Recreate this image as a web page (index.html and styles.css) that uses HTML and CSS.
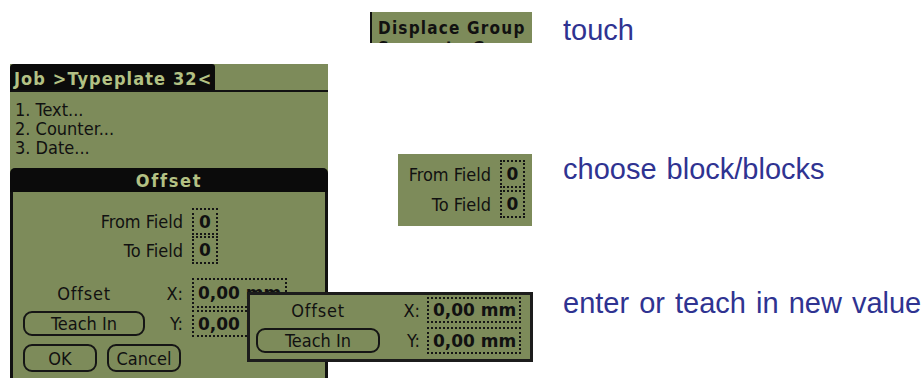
FILE: index.html
```html
<!DOCTYPE html>
<html lang="en">
<head>
    <meta charset="UTF-8">
    <meta name="viewport" content="width=device-width, initial-scale=1.0">
    <title>Displace Group - Offset</title>
    <link rel="stylesheet" href="styles.css">
</head>
<body>
    <div class="page">
        <!-- main handheld screen -->
        <div class="palm">
            <div class="titlebar"><span class="tab">Job &gt;Typeplate 32&lt;</span></div>
            <ul class="menu-list">
                <li>1. Text...</li>
                <li>2. Counter...</li>
                <li>3. Date...</li>
            </ul>
            <div class="dialog">
                <div class="dialog-title">Offset</div>
                <div class="dialog-body">
                    <div class="row row-from">
                        <span class="label label-wide">From Field</span>
                        <span class="field field-small">0</span>
                    </div>
                    <div class="row row-to">
                        <span class="label label-wide">To Field</span>
                        <span class="field field-small">0</span>
                    </div>
                    <div class="row row-x">
                        <span class="label label-cell">Offset</span>
                        <span class="label label-axis">X:</span>
                        <span class="field field-value">0,00 mm</span>
                    </div>
                    <div class="row row-y">
                        <span class="btn btn-teach">Teach In</span>
                        <span class="label label-axis">Y:</span>
                        <span class="field field-value">0,00 mm</span>
                    </div>
                    <div class="row row-buttons">
                        <span class="btn btn-ok">OK</span>
                        <span class="btn btn-cancel">Cancel</span>
                    </div>
                </div>
            </div>
        </div>

        <!-- step 1 -->
        <div class="callout callout-menu">
            <div class="menu-item">Displace Group</div>
            <div class="menu-item">Separate Group</div>
        </div>
        <p class="note note-touch">touch</p>

        <!-- step 2 -->
        <div class="callout callout-fields">
            <div class="row">
                <span class="label label-from">From Field</span>
                <span class="field field-small">0</span>
            </div>
            <div class="row row-gap">
                <span class="label label-from">To Field</span>
                <span class="field field-small">0</span>
            </div>
        </div>
        <p class="note note-choose">choose block/blocks</p>

        <!-- step 3 -->
        <div class="callout callout-offset">
            <div class="row">
                <span class="label label-cell2">Offset</span>
                <span class="label label-axis2">X:</span>
                <span class="field field-value2">0,00 mm</span>
            </div>
            <div class="row row-gap2">
                <span class="btn btn-teach2">Teach In</span>
                <span class="label label-axis2">Y:</span>
                <span class="field field-value2">0,00 mm</span>
            </div>
        </div>
        <p class="note note-enter">enter or teach in new value</p>
    </div>
</body>
</html>
```

FILE: styles.css
```css
body {
    margin: 0;
    background-color: #fff;
    font-family: "DejaVu Sans Condensed", "DejaVu Sans", sans-serif;
    font-stretch: condensed;
    color: #111;
}
.page {
    display: grid;
    grid-template-columns: 532px 1fr;
    grid-template-rows: 64px 176px 138px;
    column-gap: 31px;
    height: 378px;
    overflow: hidden;
}

/* handheld screen */
.palm {
    grid-column: 1;
    grid-row: 2 / 4;
    justify-self: start;
    margin-left: 10px;
    width: 318px;
    height: 330px;
    background-color: #7d8b5a;
    font-size: 18px;
}
.titlebar {
    display: flex;
    height: 26px;
    border-bottom: 2px solid #111;
}
.tab {
    width: 205px;
    padding-left: 4px;
    box-sizing: border-box;
    background-color: #0b0b0b;
    color: #b3c184;
    font-weight: bold;
    letter-spacing: 1.1px;
    line-height: 30px;
    border-radius: 4px 3px 0 0;
    white-space: nowrap;
}
.menu-list {
    list-style: none;
    margin: 0;
    padding: 8px 0 0 5px;
    line-height: 19px;
}
.dialog {
    margin-top: 11px;
}
.dialog-title {
    height: 24px;
    background-color: #0b0b0b;
    color: #b3c184;
    font-weight: bold;
    letter-spacing: 1.7px;
    text-align: center;
    line-height: 26px;
    border-radius: 5px 5px 0 0;
}
.dialog-body {
    border-left: 3px solid #111;
    border-right: 3px solid #111;
    height: 200px;
    padding-top: 16px;
}

/* rows, labels, fields */
.row {
    display: flex;
    align-items: center;
}
.label {
    white-space: nowrap;
}
.label-wide {
    width: 170px;
    margin-right: 9px;
    text-align: right;
}
.label-cell {
    margin-left: 10px;
    width: 122px;
    text-align: center;
    letter-spacing: 0.8px;
}
.label-axis {
    width: 38px;
    margin-right: 9px;
    text-align: right;
}
.field {
    box-sizing: border-box;
    border: 2px dotted #151515;
    font-family: "DejaVu Sans", sans-serif;
    font-stretch: normal;
    font-weight: bold;
    display: flex;
    align-items: center;
    white-space: nowrap;
    overflow: hidden;
}
.field-small {
    width: 26px;
    height: 28px;
    justify-content: center;
    font-size: 17px;
}
.row-from .field-small {
    height: 27px;
}
.row-to {
    margin-top: 1px;
}
.row-x {
    margin-top: 14px;
}
.row-x .field {
    height: 30px;
}
.row-y {
    margin-top: 2px;
}
.field-value {
    width: 95px;
    height: 27px;
    padding-left: 4px;
    font-size: 17px;
}
.btn {
    box-sizing: border-box;
    border: 2px solid #151515;
    border-radius: 9px;
    display: flex;
    align-items: center;
    justify-content: center;
    height: 25px;
}
.btn-teach {
    margin-left: 10px;
    width: 122px;
}
.row-buttons {
    margin-top: 7px;
}
.btn-ok, .btn-cancel {
    width: 74px;
    height: 28px;
}
.btn-ok {
    margin-left: 10px;
}
.btn-cancel {
    margin-left: 10px;
}

/* callouts */
.callout {
    grid-column: 1;
    justify-self: end;
    align-self: start;
    background-color: #7d8b5a;
    font-size: 18px;
    z-index: 2;
    box-sizing: border-box;
}
.callout-menu {
    grid-row: 1;
    margin-top: 12px;
    width: 162px;
    height: 31px;
    border-left: 2px solid #111;
    padding: 6px 0 0 6px;
    overflow: hidden;
}
.menu-item {
    font-weight: bold;
    font-size: 17px;
    letter-spacing: 1.2px;
    line-height: 20px;
    white-space: nowrap;
}
.callout-fields {
    grid-row: 2;
    margin-top: 90px;
    width: 134px;
    height: 72px;
    padding-top: 6px;
}
.label-from {
    width: 93px;
    margin-right: 9px;
    text-align: right;
}
.callout-fields .field-small {
    width: 25px;
}
.row-gap {
    margin-top: 2px;
}
.callout-offset {
    grid-row: 3;
    margin-top: 52px;
    width: 286px;
    height: 70px;
    margin-right: -1px;
    border: 3px solid #1c1c1c;
    padding: 2px 0 0 6px;
}
.label-cell2 {
    width: 124px;
    text-align: center;
    letter-spacing: 0.8px;
}
.label-axis2 {
    width: 40px;
    margin-right: 7px;
    text-align: right;
}
.field-value2 {
    width: 94px;
    height: 26px;
    padding-left: 4px;
    font-size: 17px;
}
.row-gap2 {
    margin-top: 4px;
}
.row-gap2 .field-value2 {
    height: 27px;
}
.btn-teach2 {
    width: 124px;
}

/* right column notes */
.note {
    grid-column: 2;
    margin: 0;
    font-family: "Liberation Sans", Arial, sans-serif;
    font-stretch: normal;
    font-size: 29px;
    line-height: 32px;
    color: #2f3391;
    word-spacing: 2px;
    white-space: nowrap;
}
.note-touch {
    grid-row: 1;
    margin-top: 14px;
}
.note-choose {
    grid-row: 2;
    margin-top: 89px;
}
.note-enter {
    grid-row: 3;
    margin-top: 47px;
}
```
